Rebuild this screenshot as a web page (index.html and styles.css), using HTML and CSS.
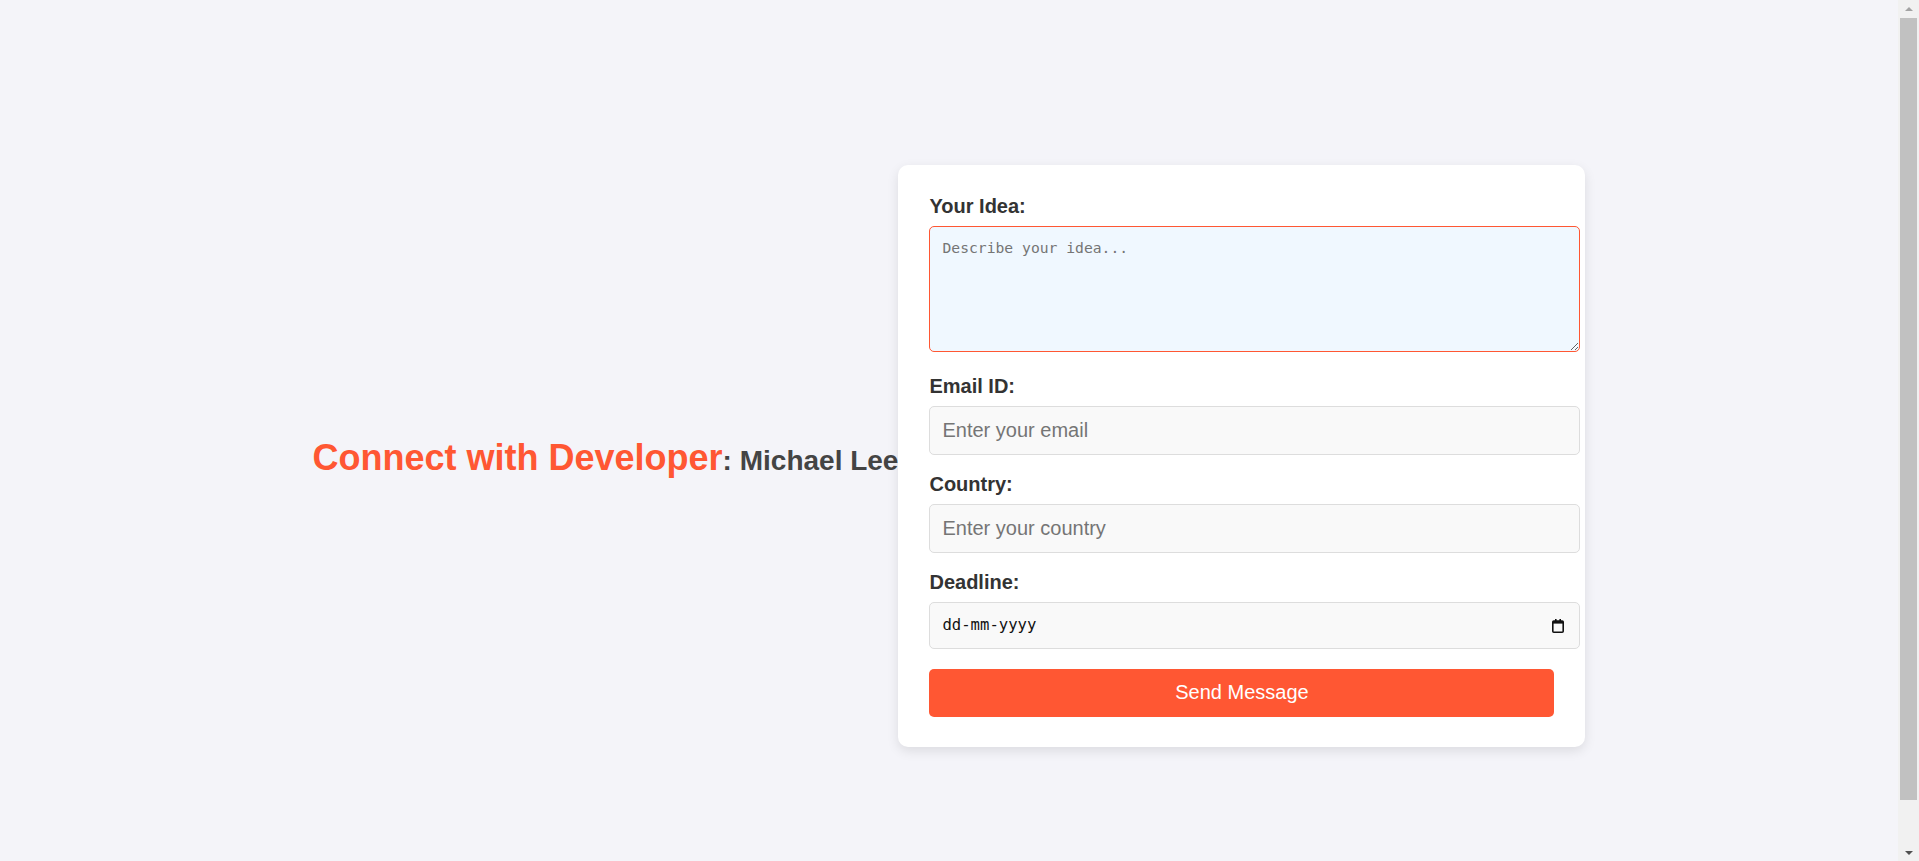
FILE: index.html
```html
<!DOCTYPE html>
<html lang="en">
<head>
<meta charset="utf-8">
<title>Connect with Developer</title>
<link rel="stylesheet" href="styles.css">
</head>
<body>
<main class="page">
  <h1 class="title"><span class="title-accent">Connect with Developer</span>: Michael Lee</h1>
  <form class="card">
    <label class="field-label" for="idea">Your Idea:</label>
    <textarea id="idea" class="field field-area is-focused" placeholder="Describe your idea..."></textarea>

    <label class="field-label" for="email">Email ID:</label>
    <input id="email" class="field" type="email" placeholder="Enter your email">

    <label class="field-label" for="country">Country:</label>
    <input id="country" class="field" type="text" placeholder="Enter your country">

    <label class="field-label" for="deadline">Deadline:</label>
    <div class="date-wrap">
      <input id="deadline" class="field field-date" type="text" placeholder="dd-mm-yyyy">
      <svg class="date-icon" width="12" height="14" viewBox="0 0 12 14" aria-hidden="true">
        <rect x="3" y="0" width="1.6" height="3" fill="#111"/>
        <rect x="7.4" y="0" width="1.6" height="3" fill="#111"/>
        <rect x="0.8" y="2" width="10.4" height="11.2" rx="1" fill="none" stroke="#111" stroke-width="1.6"/>
        <rect x="0.8" y="2" width="10.4" height="2.6" fill="#111"/>
      </svg>
    </div>

    <button class="send-btn" type="button">Send Message</button>
  </form>
</main>
<div class="scrollbar" aria-hidden="true">
  <span class="scroll-arrow scroll-up"></span>
  <span class="scroll-thumb"></span>
  <span class="scroll-arrow scroll-down"></span>
</div>
</body>
</html>
```

FILE: styles.css
```css
html, body {
  margin: 0;
}

body {
  background: #f4f4f9;
  font-family: "Liberation Sans", Arial, sans-serif;
  color: #333;
}

.page {
  min-height: 100vh;
  margin-right: 21px;
  padding: 25px 0 24px;
  display: flex;
  align-items: center;
  justify-content: center;
}

.title {
  margin: 5px 0 0;
  font-size: 28px;
  font-weight: bold;
  color: #444;
  white-space: nowrap;
}

.title-accent {
  font-size: 36px;
  color: #ff5733;
}

.card {
  width: 625px;
  flex-shrink: 0;
  padding: 30px 31px;
  background: #fff;
  border-radius: 10px;
  box-shadow: 0 4px 12px rgba(0, 0, 0, 0.1);
}

.field-label {
  display: block;
  margin-bottom: 8px;
  font-size: 20px;
  line-height: 23px;
  font-weight: bold;
  color: #333;
}

.field {
  display: block;
  width: 100%;
  padding: 12px;
  margin: 0 0 18px;
  border: 1px solid #ddd;
  border-radius: 5px;
  background: #f9f9f9;
  font-family: "Liberation Sans", Arial, sans-serif;
  font-size: 20px;
  color: #333;
  outline: none;
}

.field::placeholder {
  color: #757575;
}

.field-area {
  height: 100px;
  margin-bottom: 23px;
  font-family: "DejaVu Sans Mono", monospace;
  font-size: 14.7px;
  line-height: 17px;
  resize: vertical;
}

.field-area.is-focused {
  border-color: #ff5733;
  background: #f0f8ff;
}

.date-wrap {
  position: relative;
  margin-bottom: 20px;
}

.field-date {
  height: 21px;
  margin: 0;
  font-family: "DejaVu Sans Mono", monospace;
  font-size: 15.6px;
  color: #111;
}

.field-date::placeholder {
  color: #111;
}

.date-icon {
  position: absolute;
  top: 17px;
  right: -10px;
}

.send-btn {
  display: block;
  width: 100%;
  height: 48px;
  padding: 0;
  border: none;
  border-radius: 5px;
  background: #ff5733;
  color: #fff;
  font-family: "Liberation Sans", Arial, sans-serif;
  font-size: 20px;
  cursor: pointer;
}

/* fake window scrollbar (the reference shows one) */
.scrollbar {
  position: fixed;
  top: 0;
  right: 0;
  width: 21px;
  height: 100vh;
  background: #f1f1f1;
  display: flex;
  flex-direction: column;
  align-items: center;
}

.scroll-arrow {
  flex: 0 0 17px;
  display: flex;
  align-items: center;
  justify-content: center;
}

.scroll-arrow::before {
  content: "";
  width: 0;
  height: 0;
  border-left: 4.5px solid transparent;
  border-right: 4.5px solid transparent;
}

.scroll-up::before {
  border-bottom: 4.5px solid #a3a3a3;
}

.scroll-down::before {
  border-top: 4.5px solid #505050;
}

.scroll-thumb {
  width: 17px;
  height: 782px;
  margin-top: 1px;
  background: #c1c1c1;
}

.scroll-down {
  margin-top: auto;
}
```
